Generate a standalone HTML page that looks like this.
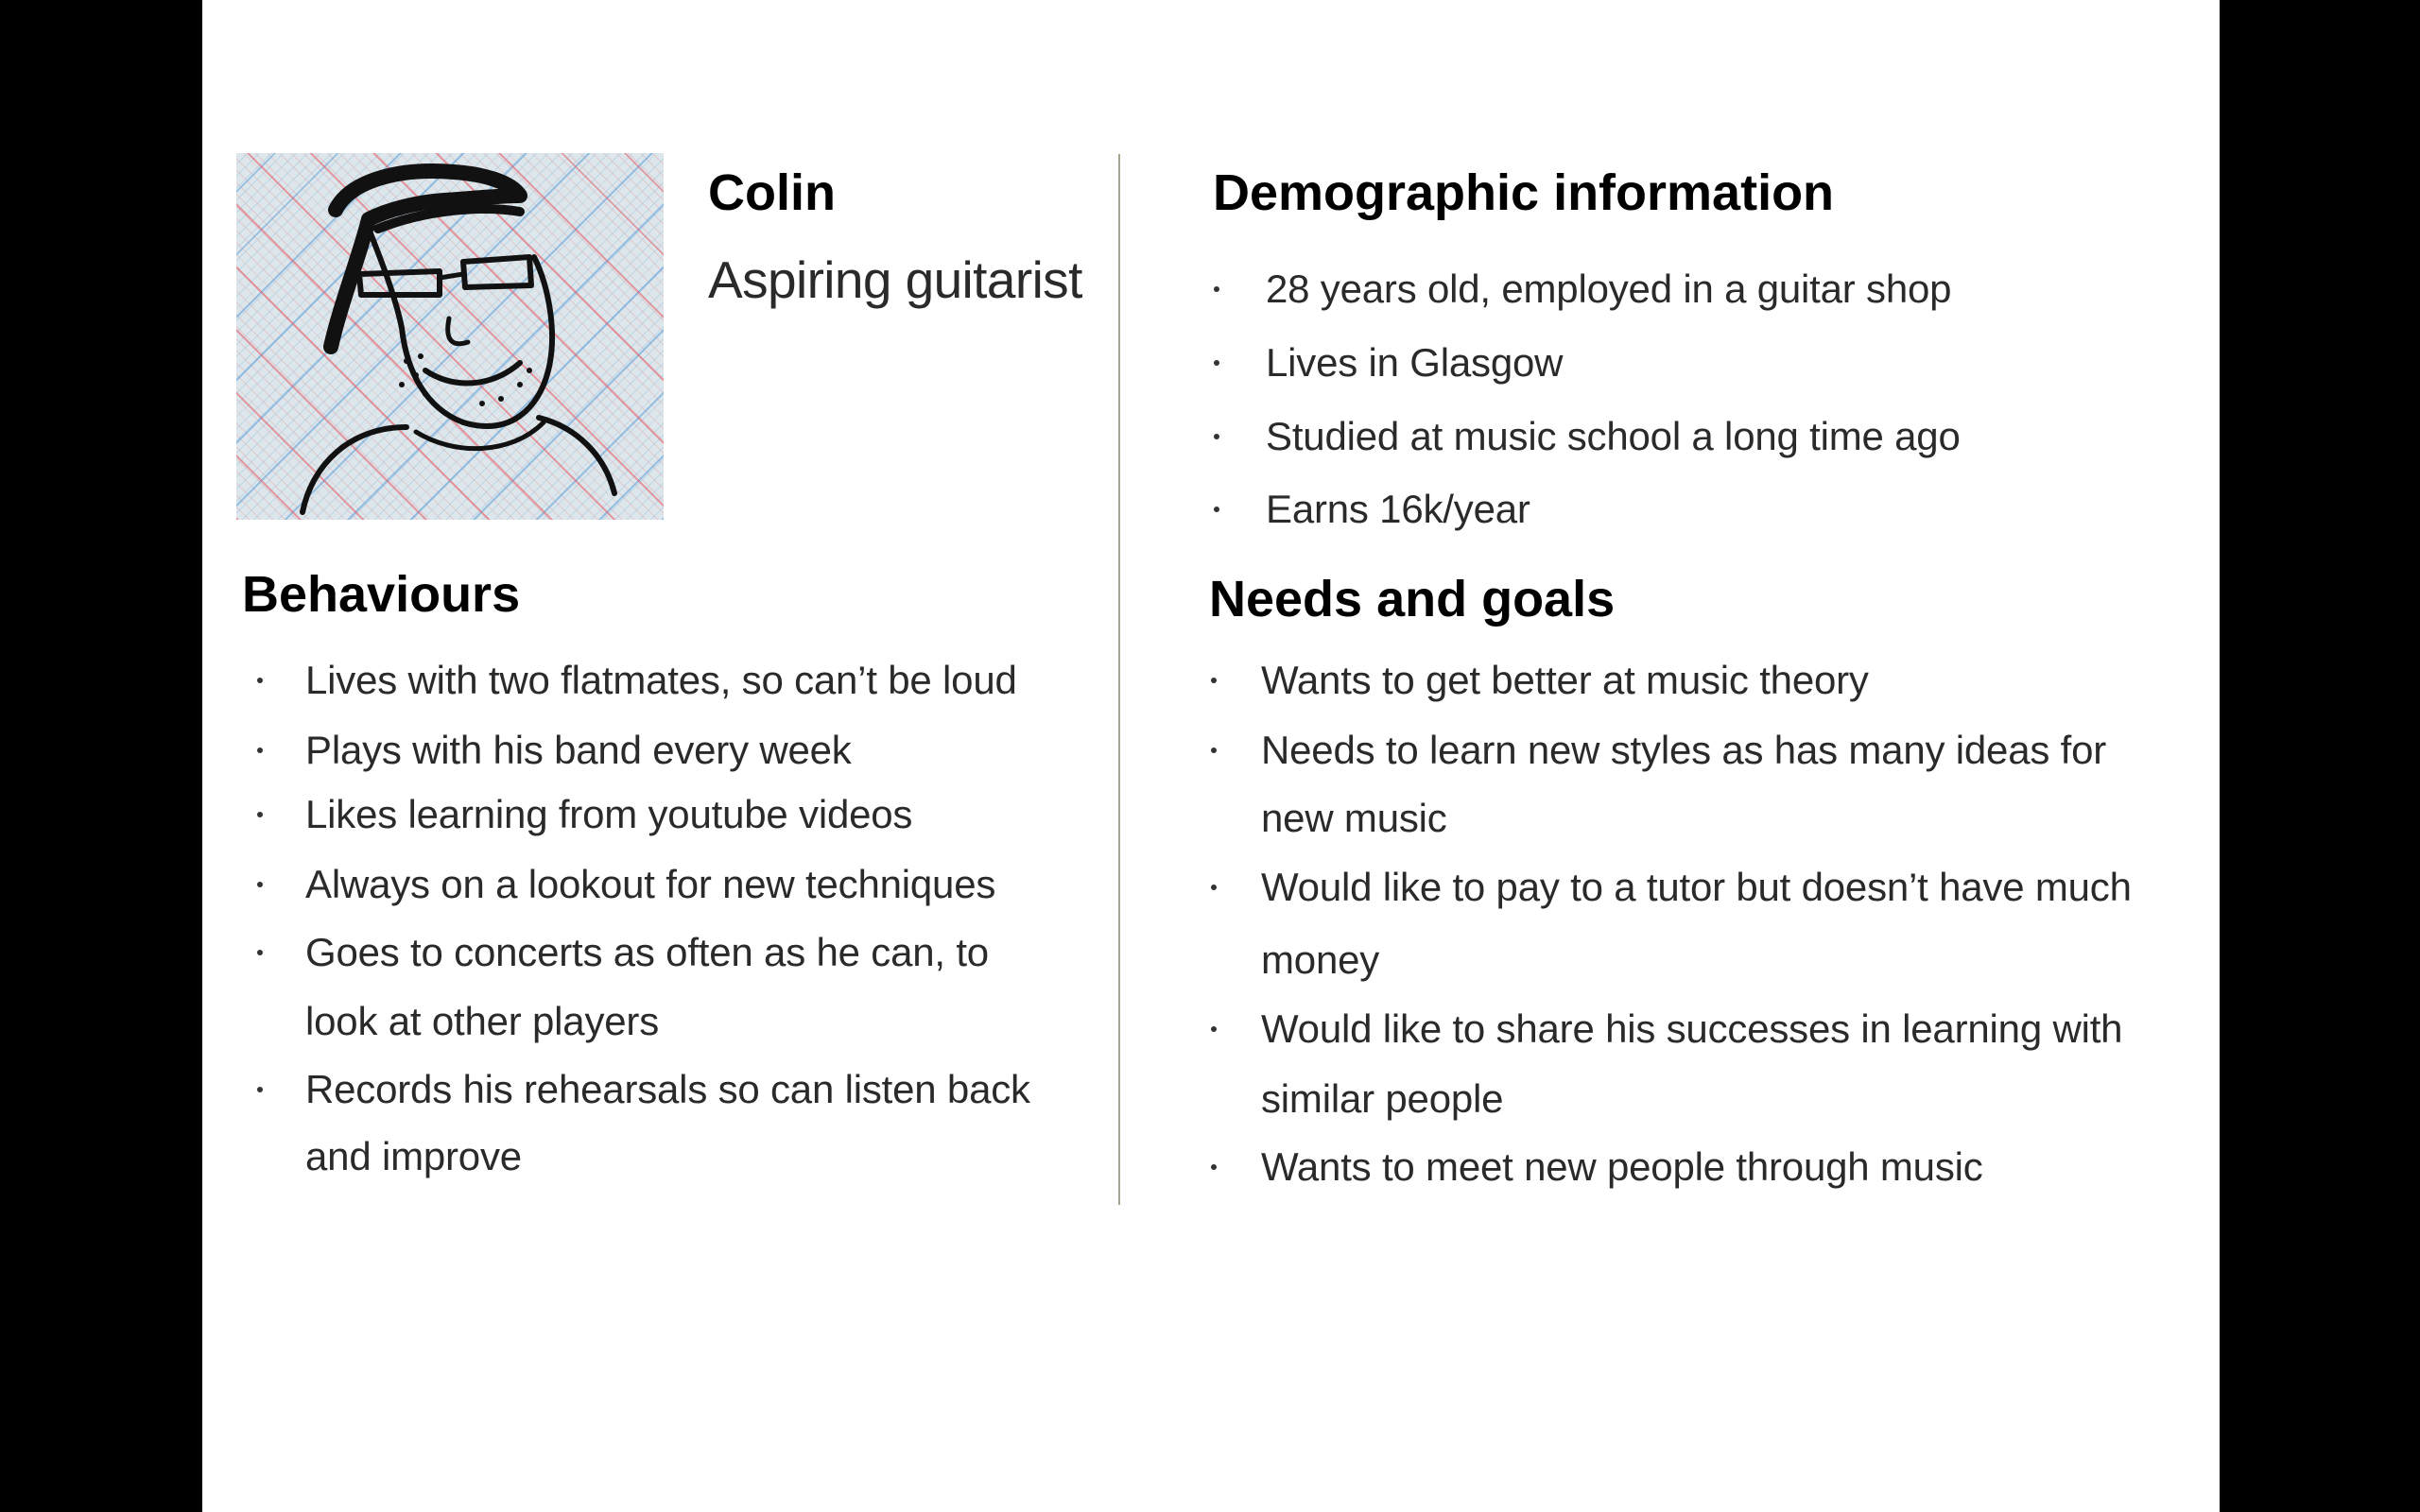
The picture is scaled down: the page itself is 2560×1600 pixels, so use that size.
<!DOCTYPE html>
<html><head><meta charset="utf-8"><style>
html,body{margin:0;padding:0;}
body{width:2560px;height:1600px;background:#000;position:relative;overflow:hidden;font-family:"Liberation Sans",sans-serif;}
#slide{position:absolute;left:214px;top:0;width:2134px;height:1600px;background:#fff;}
.t{position:absolute;white-space:nowrap;color:#2a2a2a;font-size:42px;letter-spacing:-0.2px;line-height:50px;}
.h{position:absolute;white-space:nowrap;color:#000;font-weight:bold;font-size:54px;letter-spacing:0px;line-height:60px;}
.b{position:absolute;width:6px;height:6px;border-radius:3px;background:#333;}
#photo{position:absolute;left:250px;top:162px;width:452px;height:388px;
background:
repeating-linear-gradient(45deg,rgba(230,90,100,.55) 0 2px,transparent 2px 47px),
repeating-linear-gradient(-45deg,rgba(90,160,220,.55) 0 2px,transparent 2px 47px),
repeating-linear-gradient(45deg,rgba(230,120,130,.25) 0 1px,transparent 1px 9px),
repeating-linear-gradient(-45deg,rgba(100,170,220,.25) 0 1px,transparent 1px 9px),
#dde6ea;}
#div{position:absolute;left:1183px;top:163px;width:2px;height:1112px;background:#a9a58f;}
</style></head><body>
<div id="slide"></div>
<div id="photo"><svg width="452" height="388" viewBox="0 0 452 388" fill="none" stroke="#111" stroke-linecap="round" stroke-linejoin="round">
<path d="M105 60 C120 30 170 15 230 20 C260 22 290 30 300 45 C280 45 250 48 220 50 C190 52 160 60 140 70 C130 110 110 160 100 205" stroke-width="16"/>
<path d="M150 80 C200 60 260 55 300 62" stroke-width="10"/>
<path d="M140 80 C160 130 170 160 175 185 C180 230 200 270 240 285 C290 300 320 270 330 230 C340 190 330 140 315 110" stroke-width="6"/>
<path d="M130 128 L215 125 L215 150 L132 150 Z" stroke-width="6"/>
<path d="M240 115 L310 110 L312 140 L242 142 Z" stroke-width="6"/>
<path d="M215 132 L240 128" stroke-width="5"/>
<path d="M225 175 C220 200 230 205 245 200" stroke-width="5"/>
<path d="M200 230 C230 250 270 248 300 222" stroke-width="6"/>
<path d="M180 290 C120 290 80 330 70 380" stroke-width="6"/>
<path d="M320 280 C360 290 390 320 400 360" stroke-width="6"/>
<path d="M190 295 C230 320 290 320 325 285" stroke-width="5"/>
<g fill="#111" stroke="none"><circle cx="180" cy="220" r="3"/><circle cx="190" cy="235" r="3"/><circle cx="175" cy="245" r="3"/><circle cx="200" cy="255" r="3"/><circle cx="260" cy="265" r="3"/><circle cx="280" cy="260" r="3"/><circle cx="300" cy="245" r="3"/><circle cx="310" cy="230" r="3"/><circle cx="195" cy="215" r="3"/></g>
</svg></div>
<div id="div"></div>

<div class="h" style="left:749px;top:174px;">Colin</div>
<div class="t" style="left:749px;top:265px;font-size:55px;line-height:62px;letter-spacing:-0.6px;">Aspiring guitarist</div>

<div class="h" style="left:1283px;top:174px;">Demographic information</div>
<div class="b" style="left:1284px;top:303px"></div><div class="t" style="left:1339px;top:281px">28 years old, employed in a guitar shop</div>
<div class="b" style="left:1284px;top:381px"></div><div class="t" style="left:1339px;top:359px">Lives in Glasgow</div>
<div class="b" style="left:1284px;top:459px"></div><div class="t" style="left:1339px;top:437px">Studied at music school a long time ago</div>
<div class="b" style="left:1284px;top:536px"></div><div class="t" style="left:1339px;top:514px">Earns 16k/year</div>

<div class="h" style="left:1279px;top:604px;">Needs and goals</div>
<div class="b" style="left:1281px;top:717px"></div><div class="t" style="left:1334px;top:695px">Wants to get better at music theory</div>
<div class="b" style="left:1281px;top:791px"></div><div class="t" style="left:1334px;top:769px">Needs to learn new styles as has many ideas for</div>
<div class="t" style="left:1334px;top:841px">new music</div>
<div class="b" style="left:1281px;top:936px"></div><div class="t" style="left:1334px;top:914px">Would like to pay to a tutor but doesn’t have much</div>
<div class="t" style="left:1334px;top:991px">money</div>
<div class="b" style="left:1281px;top:1086px"></div><div class="t" style="left:1334px;top:1064px">Would like to share his successes in learning with</div>
<div class="t" style="left:1334px;top:1138px">similar people</div>
<div class="b" style="left:1281px;top:1232px"></div><div class="t" style="left:1334px;top:1210px">Wants to meet new people through music</div>

<div class="h" style="left:256px;top:599px;">Behaviours</div>
<div class="b" style="left:272px;top:717px"></div><div class="t" style="left:323px;top:695px">Lives with two flatmates, so can’t be loud</div>
<div class="b" style="left:272px;top:791px"></div><div class="t" style="left:323px;top:769px">Plays with his band every week</div>
<div class="b" style="left:272px;top:859px"></div><div class="t" style="left:323px;top:837px">Likes learning from youtube videos</div>
<div class="b" style="left:272px;top:933px"></div><div class="t" style="left:323px;top:911px">Always on a lookout for new techniques</div>
<div class="b" style="left:272px;top:1005px"></div><div class="t" style="left:323px;top:983px">Goes to concerts as often as he can, to</div>
<div class="t" style="left:323px;top:1056px">look at other players</div>
<div class="b" style="left:272px;top:1150px"></div><div class="t" style="left:323px;top:1128px">Records his rehearsals so can listen back</div>
<div class="t" style="left:323px;top:1199px">and improve</div>
</body></html>
